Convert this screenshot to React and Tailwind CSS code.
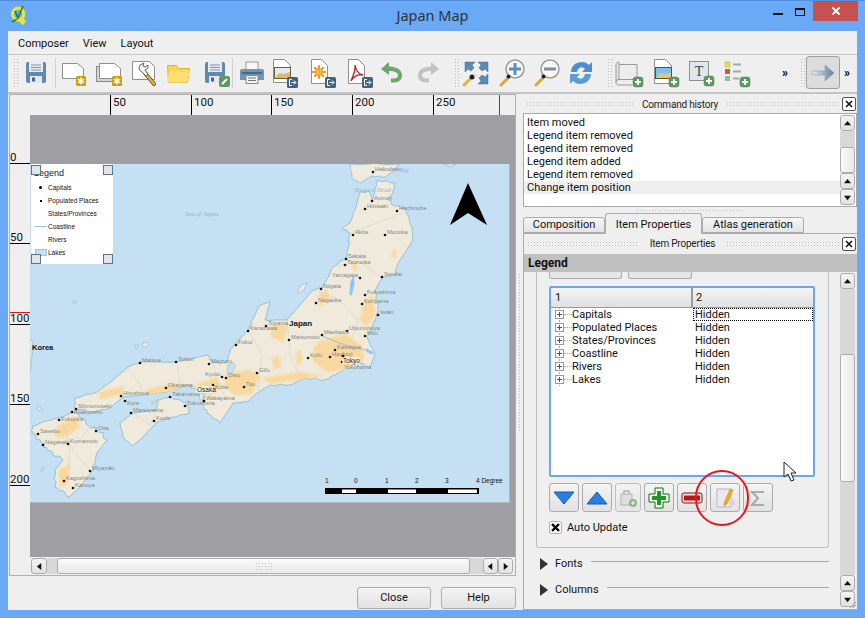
import React from "react";

const grip = "bg-[radial-gradient(#bdbdbd_1px,transparent_1px)] bg-[length:3px_3px]";
const checker = "bg-[radial-gradient(#d8d8d8_1px,#ffffff_1px)] bg-[length:2px_2px]";
const btnFace = "border border-[#acacac] rounded-[3px] bg-gradient-to-b from-[#f4f4f4] to-[#e2e2e2]";

// --- toolbar icons, all on a 30x30 box ---
const Svg = ({ children }) => (
  <svg width="30" height="30" viewBox="0 0 30 30" className="shrink-0">{children}</svg>
);

const PlusBadge = ({ x = 20, y = 20 }) => (
  <g>
    <rect x={x} y={y} width="10" height="10" rx="2.5" fill="#5d9a5f" stroke="#47804a" strokeWidth="0.5" />
    <path d={`M${x + 5} ${y + 2}v6M${x + 2} ${y + 5}h6`} stroke="#fff" strokeWidth="2" />
  </g>
);
const ExportBadge = ({ x = 19, y = 19 }) => (
  <g>
    <rect x={x} y={y} width="11" height="11" rx="1.5" fill="#45637f" />
    <path d={`M${x + 5} ${y + 2.5}h-2.5v6h2.5M${x + 4.5} ${y + 5.5}h4M${x + 7} ${y + 3.5}l2 2-2 2`} stroke="#fff" strokeWidth="1" fill="none" />
  </g>
);
const GoldBadge = ({ x = 19, y = 18 }) => (
  <g>
    <rect x={x} y={y} width="10" height="10" rx="1.5" fill="#c9a106" />
    <path d={`M${x + 5} ${y + 1.5}v7M${x + 1.8} ${y + 3.2}l6.4 3.6M${x + 8.2} ${y + 3.2}l-6.4 3.6`} stroke="#fff" strokeWidth="1.5" />
  </g>
);
const Page = ({ x = 7, y = 3, w = 16, h = 22 }) => (
  <path d={`M${x + 0.5} ${y + 0.5}h${w - 6}l6 6v${h - 6}h-${w}z`} fill="#fff" stroke="#8f8f8f" />
);
const Floppy = () => (
  <g>
    <rect x="5" y="4" width="20" height="21" rx="2" fill="#6288ae" />
    <rect x="8" y="4" width="14" height="10" fill="#e6ecf2" />
    <path d="M10 7h10M10 9.5h10M10 12h10" stroke="#7c96b0" />
    <rect x="9" y="18" width="12" height="7" fill="#e3e9ef" />
    <rect x="11" y="19.5" width="3" height="4" fill="#49688a" />
  </g>
);
const Handle = () => <path d="M11 20L4 27" stroke="#d9a93a" strokeWidth="3" strokeLinecap="round" />;

const SaveIcon = () => <Svg><Floppy /></Svg>;
const NewIcon = () => (
  <Svg>
    <path d="M5.5 5.5h15l6 5v10h-21z" fill="#fff" stroke="#8f8f8f" />
    <GoldBadge x={19} y={18} />
  </Svg>
);
const DupIcon = () => (
  <Svg>
    <rect x="2.5" y="8.5" width="20" height="15" fill="#d4d4d4" stroke="#8a8a8a" />
    <path d="M5.5 5.5h15l6 5v10h-21z" fill="#fff" stroke="#8f8f8f" />
    <GoldBadge x={18} y={18} />
  </Svg>
);
const ManagerIcon = () => (
  <Svg>
    <path d="M3.500 3.500h17l5 5v13h-22z" fill="#fff" stroke="#8f8f8f" />
    <path d="M16 15l9 11" stroke="#5a4a20" strokeWidth="4" strokeLinecap="round" />
    <path d="M16 15l9 11" stroke="#e0b545" strokeWidth="2.500" strokeLinecap="round" />
    <path d="M11 7a4.500 4.500 0 0 0 2 7l4 4 2-2-3-4a4.500 4.500 0 0 0 3-5l-3 2-2-1 1-3z" fill="#f2f2f2" stroke="#555" strokeWidth="0.9" />
  </Svg>
);
const OpenIcon = () => (
  <Svg>
    <path d="M3.5 7.5h9l2 3h11l-2 14h-19z" fill="#fbd653" stroke="#d8b446" />
    <path d="M5 13h21l-3 11.5H3.5z" fill="#fde071" />
  </Svg>
);
const SaveAsIcon = () => (
  <Svg>
    <Floppy />
    <rect x="19" y="18" width="11" height="11" rx="2" fill="#5d9a5f" />
    <path d="M22 26l5-5" stroke="#fff" strokeWidth="2" />
  </Svg>
);
const PrintIcon = () => (
  <Svg>
    <rect x="9" y="4" width="12" height="9" fill="#f8f8f8" stroke="#9a9a9a" />
    <path d="M5 11h20a2 2 0 0 1 2 2v9h-24v-9a2 2 0 0 1 2-2z" fill="#6e94b6" />
    <rect x="5" y="14" width="20" height="2" fill="#46678a" />
    <rect x="9" y="17.5" width="12" height="8" fill="#f4f4f4" stroke="#888" />
    <path d="M11 20h8M11 22.5h8" stroke="#777" />
  </Svg>
);
const ImageIcon = () => (
  <Svg>
    <Page x={4} y={1} w={17} h={23} />
    <rect x="5" y="9" width="17" height="12" fill="#6f5d2c" />
    <rect x="6" y="10" width="15" height="10" fill="#e2eaef" />
    <path d="M6 20l4-5 5 1 6-2v6z" fill="#d9bc6a" />
    <ExportBadge x={18} y={19} />
  </Svg>
);
const SvgFileIcon = () => (
  <Svg>
    <Page x={5} y={1} w={16} h={24} />
    <g stroke="#ee9420" strokeWidth="2.2" strokeLinecap="round">
      <path d="M13 8v12M7 14h12M9 10l8 8M17 10l-8 8" />
    </g>
    <circle cx="13" cy="14" r="3" fill="#f7b13c" />
    <ExportBadge x={19} y={19} />
  </Svg>
);
const PdfIcon = () => (
  <Svg>
    <Page x={5} y={1} w={16} h={24} />
    <path d="M12 7c1 6 3 9 8 10-5-1-9 1-12 6 2-6 5-10 4-16z" fill="none" stroke="#b5262b" strokeWidth="1.4" />
    <ExportBadge x={19} y={19} />
  </Svg>
);
const UndoIcon = ({ color = "#6ea66f" }) => (
  <Svg>
    <path d="M4 11l8-7v4.5c8 0 13 3.5 13 9 0 4-3 7-8 7h-3v-4h3c2 0 4-1 4-3 0-3-3-4.500-9-4.500V17z" fill={color} />
  </Svg>
);
const RedoIcon = () => (
  <Svg>
    <path d="M26 11l-8-7v4.500c-8 0-13 3.500-13 9 0 4 3 7 8 7h3v-4h-3c-2 0-4-1-4-3 0-3 3-4.500 9-4.500V17z" fill="#c2c2c2" />
  </Svg>
);
const ZoomFullIcon = () => (
  <Svg>
    <path d="M4 4h10l-3 3 2 3-3 3-3-2-3 3zM27 4v10l-3-3-3 2-3-3 2-3-3-3zM27 26h-10l3-3-2-3 3-3 3 2 3-3z" fill="#5b8ab5" stroke="#3d6d97" strokeWidth="0.5" />
    <path d="M12 14l6 6" stroke="#cfd8df" strokeWidth="1" />
    <path d="M10 20L3 27" stroke="#e2b43a" strokeWidth="3" strokeLinecap="round" />
    <circle cx="11" cy="19" r="2.500" fill="#222" />
  </Svg>
);
const ZoomInIcon = () => (
  <Svg>
    <circle cx="18" cy="11" r="9" fill="#f7f7f7" stroke="#9c9c9c" strokeWidth="1.5" />
    <path d="M18 5v12M12 11h12" stroke="#5d8fbe" strokeWidth="3" />
    <Handle />
    <circle cx="11.500" cy="18.500" r="2" fill="#222" />
  </Svg>
);
const ZoomOutIcon = () => (
  <Svg>
    <circle cx="18" cy="11" r="9" fill="#f7f7f7" stroke="#9c9c9c" strokeWidth="1.5" />
    <path d="M12 11h12" stroke="#7b8d9e" strokeWidth="3" />
    <Handle />
    <circle cx="11.500" cy="18.500" r="2" fill="#222" />
  </Svg>
);
const RefreshIcon = () => (
  <Svg>
    <path d="M5 14c0-6 5-10 11-10 3 0 5 1 7 3l3-3v10H16l3-3c-3-3-7-2-8 3z" fill="#4d8fcb" />
    <path d="M25 16c0 6-5 10-11 10-3 0-5-1-7-3l-3 3V16h10l-3 3c3 3 7 2 8-3z" fill="#5c9dd6" />
  </Svg>
);
const AddMapIcon = () => (
  <Svg>
    <path d="M5 4c-2 0-3 1-3 3v17c0-2 2-3 3-3z" fill="#e6e6e6" stroke="#9a9a9a" />
    <path d="M5 6.500h18v15H5c-1 0-3 1-3 3 0 1.500 1 2.500 3 2.500h13" fill="#ececec" stroke="#9a9a9a" />
    <PlusBadge x={19} y={19} />
  </Svg>
);
const AddImageIcon = () => (
  <Svg>
    <Page x={4} y={1} w={17} h={24} />
    <rect x="5" y="9" width="17" height="12" fill="#5d5428" />
    <rect x="6" y="10" width="15" height="10" fill="#7dc3ec" />
    <path d="M6 20l4-5 5 1 6-1v5z" fill="#e2c77a" />
    <PlusBadge x={19} y={19} />
  </Svg>
);
const AddLabelIcon = () => (
  <Svg>
    <rect x="3.500" y="3.500" width="19" height="19" fill="#dfe7ee" stroke="#8f8f8f" />
    <text x="13" y="18" textAnchor="middle" fontSize="14" fontFamily="Liberation Serif, serif" fill="#444">T</text>
    <PlusBadge x={18} y={18} />
  </Svg>
);
const AddLegendIcon = () => (
  <Svg>
    <rect x="4" y="4" width="5" height="5" fill="#eadf4f" stroke="#b8b040" strokeWidth="0.5" />
    <rect x="4" y="11" width="5" height="5" fill="#c05a5a" />
    <rect x="4" y="18" width="5" height="5" fill="#8fbf8a" />
    <path d="M12 6.500h8M12 13.500h8M12 20.500h6" stroke="#a8a8a8" strokeWidth="2" />
    <PlusBadge x={19} y={19} />
  </Svg>
);
const MoveIcon = () => (
  <svg width="24" height="18" viewBox="0 0 24 18">
    <defs>
      <linearGradient id="mv" x1="0" x2="1">
        <stop offset="0" stopColor="#e6ebf0" />
        <stop offset="1" stopColor="#5d7f9e" />
      </linearGradient>
    </defs>
    <path d="M1 7h13V1l9 8-9 8v-6H1z" fill="url(#mv)" stroke="#7b96ae" strokeWidth="0.5" />
  </svg>
);

const Grip = ({ className }) => <div className={`${grip} ${className}`} />;
const Sep = ({ className }) => <div className={`w-[1px] h-[30px] bg-[#cfcfcf] ${className}`} />;
const Chevrons = ({ className }) => (
  <span className={`w-[10px] text-[12px] font-bold leading-none text-black ${className}`}>»</span>
);

const Triangle = ({ dir, size = 7 }) => {
  const pts = {
    up: "0,6 8,6 4,1",
    down: "0,2 8,2 4,7",
    left: "6,0 6,8 1,4",
    right: "2,0 2,8 7,4",
  };
  return (
    <svg width={size} height={size} viewBox="0 0 8 8">
      <polygon points={pts[dir]} fill="#111" />
    </svg>
  );
};

const ScrollBtn = ({ dir, className = "" }) => (
  <div className={`${btnFace} flex items-center justify-center shrink-0 ${className}`}>
    <Triangle dir={dir} />
  </div>
);

const CloseBox = () => (
  <div className="w-[14px] h-[14px] border border-[#555] rounded-[2px] bg-white flex items-center justify-center shrink-0">
    <svg width="8" height="8" viewBox="0 0 8 8"><path d="M1 1l6 6M7 1L1 7" stroke="#111" strokeWidth="1.6" /></svg>
  </div>
);

const DockTitle = ({ title, leftW, rightW, height = "h-[18px]" }) => (
  <div className={`${height} flex items-center shrink-0 text-[10px] tracking-[-0.2px] text-[#222]`}>
    <Grip className={`h-[6px] ml-[3px] ${leftW}`} />
    <span className="flex-1 text-center whitespace-nowrap">{title}</span>
    <Grip className={`h-[6px] ${rightW} mr-[1px]`} />
    <CloseBox />
    <div className="w-[1px]" />
  </div>
);

// --- map data, in page pixels (viewBox matches the map's place on the page) ---
// [name, x, y, label dy, label anchor]
const CITIES = [
  ["Hakodate", 373, 172], ["Aomori", 372, 201], ["Hirosaki", 365, 209], ["Hachinohe", 397, 211],
  ["Akita", 353, 235], ["Morioka", 385, 235], ["Sakata", 346, 259], ["Tsuruoka", 345, 265],
  ["Yamagata", 360, 278, 0, "end"], ["Sendai", 382, 277], ["Niigata", 321, 289], ["Fukushima", 365, 295],
  ["Koriyama", 362, 304], ["Nagaoka", 316, 303], ["Iwaki", 378, 315], ["Utsunomiya", 347, 331],
  ["Mito", 365, 336], ["Maebashi", 322, 335], ["Matsumoto", 289, 340], ["Toyama", 266, 326],
  ["Kofu", 308, 358], ["Kawagoe", 335, 350], ["Hachioji", 330, 357], ["Yokohama", 342, 362, 8],
  ["Kanazawa", 248, 331], ["Fukui", 236, 345], ["Gifu", 257, 373], ["Tsu", 244, 387],
  ["Matsue", 140, 363], ["Tottori", 176, 362], ["Maizuru", 209, 364], ["Kyoto", 222, 377, 0, "end"],
  ["Otsu", 226, 378], ["Kobe", 213, 385, 5], ["Okayama", 166, 388], ["Takamatsu", 170, 397],
  ["Tokushima", 185, 406], ["Wakayama", 204, 401], ["Hiroshima", 121, 396], ["Kure", 125, 401, 5],
  ["Matsuyama", 131, 413], ["Kochi", 154, 421], ["Shimonoseki", 76, 409], ["Kitakyushu", 72, 412, 3],
  ["Fukuoka", 59, 420, 2], ["Sasebo", 38, 434], ["Nagasaki", 43, 445], ["Kumamoto", 68, 444],
  ["Oita", 96, 431], ["Miyazaki", 90, 471], ["Kagoshima", 64, 481], ["Kanoya", 73, 488],
];

const HONSHU =
  "360,192 370,192 372,200 375,192 377,180 395,183 393,193 388,198 393,205 405,208 412,227 413,240 402,257 397,265 395,275 382,278 375,290 378,310 375,320 367,337 375,355 370,367 358,362 350,366 340,372 325,380 305,378 290,385 270,385 257,393 247,402 233,403 220,423 207,413 202,403 208,387 197,390 187,385 167,392 143,395 123,397 110,408 93,412 75,408 75,398 97,392 113,380 128,367 140,362 177,362 207,355 213,363 227,363 230,350 248,330 257,310 260,305 270,302 265,320 287,320 313,290 323,287 333,267 347,257 350,233 342,228 350,223 355,210";
const SHIKOKU = "120,423 133,413 157,410 157,400 170,397 187,403 190,413 173,417 157,422 140,440 132,446 123,437";
const KYUSHU =
  "32,427 43,422 62,417 73,412 78,413 90,427 97,428 107,440 97,453 93,470 80,487 68,498 65,493 55,487 55,470 63,460 47,450 42,443 32,433";
const HOKKAIDO = "350,164 352,178 360,183 372,176 385,177 395,170 399,164";

// adds small fixed wiggles between the traced points so a coast doesn't look like a polygon
const rough = (pts, amp = 1) => {
  const list = pts.split(" ").map((p) => p.split(",").map(Number));
  let d = "";
  list.forEach(([x, y], i) => {
    const [nx, ny] = list[(i + 1) % list.length];
    d += `${i ? "L" : "M"}${x} ${y}`;
    for (let k = 1; k < 4; k++) {
      const off = Math.sin((i + 1) * 12.9 + k * 78.2) * amp;
      d += `L${(x + ((nx - x) * k) / 4 + off).toFixed(1)} ${(y + ((ny - y) * k) / 4 - off).toFixed(1)}`;
    }
  });
  return d + "z";
};

const URBAN = [
  "M322 340L345 334L362 345L364 360L345 370L326 372L312 360L314 347z",
  "M226 374L250 370L260 376L252 394L236 396L224 386z",
  "M192 386L215 377L222 385L210 396L198 390z",
  "M145 390L170 384L186 386L170 392L148 395z",
  "M98 392L125 386L122 394L100 400z",
  "M58 426L75 416L80 428L62 438L54 436z",
  "M58 470L70 464L68 484L60 488z",
  "M270 325L288 324L284 342L272 338z",
  "M363 302L373 294L375 316L366 328L360 320z",
  "M318 296L327 288L330 298L320 308z",
  "M262 378L300 372L325 376L300 380L270 384z",
  "M352 345l4-3 2 4-3 3z M352 262l5-2 0 10-4 2z M392 250l5 0-1 8-4 0z M296 352l5-2 1 12-5 4z M272 358l7-3 2 12-7 3z",
];
const BORDERS = [
  "M333 267L360 262L382 278", "M350 233L372 225L404 212", "M313 290L340 300L358 320L350 345",
  "M287 320L290 355L300 378", "M248 330L262 355L258 390", "M128 367L140 385L143 395",
  "M177 362L180 385", "M213 363L218 385L228 400", "M62 417L70 445L68 470", "M90 427L72 450L90 470",
  "M133 413L150 425L157 410",
];
const LAND = { fill: "#efeadb", stroke: "#84b8d2", strokeLinejoin: "round" };

const MapSvg = () => (
  <svg width="479" height="338" viewBox="30 164 479 338" className="block shrink-0">
    <defs>
      <filter id="soft" x="-20%" y="-20%" width="140%" height="140%">
        <feGaussianBlur stdDeviation="1.200" />
      </filter>
    </defs>
    <rect x="30" y="164" width="479" height="338" fill="#c5e0f3" />
    <path d="M30 340L33 341L32 356L30 372z" {...LAND} strokeWidth="0.6" />
    <path d="M444 164L456 164L450 167z" {...LAND} strokeWidth="0.6" />
    <path d={rough(HOKKAIDO, 0.7)} {...LAND} strokeWidth="0.7" />
    <path d={rough(HONSHU, 0.8)} {...LAND} strokeWidth="0.8" />
    <path d={rough(SHIKOKU, 0.7)} {...LAND} strokeWidth="0.8" />
    <path d={rough(KYUSHU, 1.1)} {...LAND} strokeWidth="0.8" />
    <path d="M297 293L301 285L307 283L304 290L300 292z" {...LAND} strokeWidth="0.6" />
    <path d="M142 344l4-2 3 2-2 3-4 0z M135 345l3 0 0 3-3 0z M73 301l3 0 0 2-3 0z" {...LAND} strokeWidth="0.6" />
    <path d="M198 392l5 2 0 6-3 0z M152 402l6-1 0 2-6 1z M37 408l3-2 2 3-3 2z M40 470l4-3 -2 5z" {...LAND} strokeWidth="0.6" />
    <g filter="url(#soft)" fill="#fbd79a" opacity="0.9">
      {URBAN.map((d, i) => (
        <path key={i} d={d} />
      ))}
    </g>
    {BORDERS.map((d, i) => (
      <path key={i} d={d} fill="none" stroke="#d6d2c2" strokeWidth="0.6" />
    ))}
    <path d="M350 282l4-8 1 10-3 12-3-1z" fill="#8fc6ee" stroke="#e8f3fb" strokeWidth="0.6" />
    <path d="M228 365l5-3 3 4-5 8-4-1z" fill="#c5e0f3" stroke="#84b8d2" strokeWidth="0.5" />
    <path d="M322 336L345 345L365 350" fill="none" stroke="#84b8d2" strokeWidth="0.8" />
    <path d="M366 348l8 4-2 3-7-4z" fill="#8fc6ee" stroke="#e8f3fb" strokeWidth="0.5" />
    <g fontFamily="Liberation Serif, serif" fontStyle="italic" fill="#8ab6d2">
      <text x="185" y="216" fontSize="6.500">Sea of Japan</text>
      <text x="354" y="192" fontSize="6.500">Tsugaru Strait</text>
      <text x="399" y="172" fontSize="6.500">Bay</text>
    </g>
    {CITIES.map(([name, x, y, dy = 0, anchor]) => (
      <g key={name}>
        <circle cx={x} cy={y} r="1.300" fill="#111" />
        <text
          x={anchor ? x - 2 : x + 2}
          y={y - 1 + dy}
          textAnchor={anchor || "start"}
          fontSize="5.800"
          fill="#85857f"
          fontFamily="Liberation Sans, sans-serif"
        >
          {name}
        </text>
      </g>
    ))}
    <circle cx="343" cy="356" r="1.500" fill="#111" />
    <rect x="342" y="357" width="18" height="7" fill="#fff" opacity="0.6" />
    <text x="343" y="363" fontSize="6.500" fill="#222" fontFamily="Liberation Sans, sans-serif">Tokyo</text>
    <rect x="196" y="386" width="17" height="7" fill="#fff" opacity="0.6" />
    <text x="197" y="392" fontSize="6.500" fill="#222" fontFamily="Liberation Sans, sans-serif">Osaka</text>
    <text x="289" y="326" fontSize="8" fontWeight="700" fill="#111" fontFamily="Liberation Sans, sans-serif">Japan</text>
    <text x="32" y="350" fontSize="7.500" fontWeight="700" fill="#111" fontFamily="Liberation Sans, sans-serif">Korea</text>
    <polygon points="468,183 487,225 468,213 450,225" fill="#000" />
    <rect x="325" y="488" width="154" height="6" fill="#000" />
    <rect x="342" y="489.500" width="14" height="3.500" fill="#fff" />
    <rect x="388" y="489.500" width="28" height="3.500" fill="#fff" />
    <rect x="448" y="489.500" width="29" height="3.500" fill="#fff" />
    <g fontSize="6.500" fill="#111" fontFamily="Liberation Sans, sans-serif">
      <text x="325" y="483">1</text>
      <text x="354" y="483">0</text>
      <text x="385" y="483">1</text>
      <text x="415" y="483">2</text>
      <text x="445" y="483">3</text>
      <text x="476" y="483">4 Degree</text>
    </g>
  </svg>
);

const LEGEND_ITEMS = [
  ["Capitals", "dotBig"], ["Populated Places", "dot"], ["States/Provinces", ""],
  ["Coastline", "line"], ["Rivers", ""], ["Lakes", "lake"],
];

const Handle8 = ({ className }) => (
  <div className={`absolute w-[10px] h-[10px] bg-[#e4e4e8] border border-[#54788f] ${className}`} />
);

const LegendItem = () => (
  <div className="absolute left-[1px] top-0 w-[82px] h-[100px] bg-white pl-[3px] pt-[3px] font-['Liberation_Sans',sans-serif]">
    <div className="text-[9px] leading-[12px] text-[#222] h-[14px]">Legend</div>
    {LEGEND_ITEMS.map(([name, kind]) => (
      <div key={name} className="flex items-center h-[13px] text-[6.500px] text-[#111] whitespace-nowrap">
        <div className="w-[13px] flex justify-center items-center mr-[1px]">
          {kind === "dotBig" && <div className="w-[3px] h-[3px] rounded-full bg-black" />}
          {kind === "dot" && <div className="w-[2px] h-[2px] bg-black" />}
          {kind === "line" && <div className="w-[12px] h-[1px] bg-[#9cc4dc]" />}
          {kind === "lake" && <div className="w-[12px] h-[7px] bg-[#c5e0f3] border border-[#9cc4dc]" />}
        </div>
        {name}
      </div>
    ))}
    <Handle8 className="left-[0px] top-[1px]" />
    <Handle8 className="left-[72px] top-[1px]" />
    <Handle8 className="left-[0px] top-[90px]" />
    <Handle8 className="left-[72px] top-[90px]" />
  </div>
);

const TOP_TICKS = [["50", 100], ["100", 181], ["150", 261], ["200", 342], ["250", 423]];
const LEFT_TICKS = [["0", 49], ["50", 129], ["100", 210], ["150", 290], ["200", 371]];

const TopRuler = () => (
  <div className="h-[20px] bg-[#efefef] relative shrink-0 text-[11.500px] leading-[14px]">
    {TOP_TICKS.map(([label, x]) => (
      <div key={label} className="absolute top-0 h-[20px] border-l border-black pl-[2px] text-[#111]" style={{ left: x }}>{label}</div>
    ))}
    <div className="absolute top-0 h-[20px] w-[1px] bg-[#d01818] left-[489px]" />
  </div>
);

const LeftRuler = () => (
  <div className="w-[20px] bg-[#efefef] relative shrink-0 text-[11.500px] leading-[17px]">
    {LEFT_TICKS.map(([label, y]) => (
      <div key={label} className="absolute left-0 w-[20px] h-[15px] border-b border-black text-[#111]" style={{ top: y - 15 }}>{label}</div>
    ))}
    <div className="absolute left-0 w-[20px] h-[1px] bg-[#d01818] top-[197px]" />
  </div>
);

const TreeRow = ({ name, focus }) => (
  <div className="flex h-[13px] leading-[14px] text-[11px] text-[#111]">
    <div className="w-[142px] flex items-center pl-[4px] shrink-0 relative">
      <div className="absolute left-[8px] top-0 bottom-0 border-l border-dotted border-[#aaa]" />
      <div className="w-[9px] h-[9px] border border-[#999] bg-white relative flex items-center justify-center shrink-0">
        <svg width="7" height="7" viewBox="0 0 7 7"><path d="M3.500 1v5M1 3.500h5" stroke="#555" /></svg>
      </div>
      <div className="w-[8px] border-t border-dotted border-[#aaa] shrink-0" />
      <span className="whitespace-nowrap">{name}</span>
    </div>
    <div className={`flex-1 pl-[2px] ${focus ? "outline outline-1 -outline-offset-1 outline-dotted outline-black" : ""}`}>Hidden</div>
  </div>
);

const IconBtn = ({ children, className = "w-[30px]" }) => (
  <div className={`${btnFace} h-[29px] flex items-center justify-center shrink-0 ${className}`}>{children}</div>
);

const Collapsed = ({ label, className }) => (
  <div className={`flex items-center h-[16px] text-[11px] text-[#111] shrink-0 ${className}`}>
    <svg width="8" height="12" viewBox="0 0 8 12" className="ml-[4px] mr-[7px] shrink-0"><polygon points="0,0 8,6 0,12" fill="#333" /></svg>
    <span className="whitespace-nowrap mr-[8px]">{label}</span>
    <div className="flex-1 h-[1px] bg-[#a8a8a8] mb-[6px]" />
  </div>
);

const Tab = ({ label, active, className }) => (
  <div
    className={`border border-[#acacac] rounded-t-[3px] flex items-center justify-center text-[11px] text-[#111] ${
      active ? "h-[21px] pt-[2px] bg-[#efefef] border-b-0 z-10 -mb-[1px]" : "h-[16px] bg-gradient-to-b from-[#f6f6f6] to-[#e4e4e4]"
    } ${className}`}
  >
    {label}
  </div>
);

const HISTORY = [
  "Item moved", "Legend item removed", "Legend item removed",
  "Legend item added", "Legend item removed", "Change item position",
];
const LAYERS = ["Capitals", "Populated Places", "States/Provinces", "Coastline", "Rivers", "Lakes"];

const App = () => (
  <div className="w-[865px] h-[618px] bg-[#69a9f5] flex flex-col relative overflow-hidden font-['Roboto',sans-serif]">
    {/* Title bar */}
    <div className="h-[31px] relative flex items-center justify-center shrink-0 border-t border-[#4f8fdc]">
      <svg width="22" height="22" viewBox="0 0 22 22" className="absolute left-[7px] top-[3px]">
        <path d="M11 4a6 6 0 1 0 1 12l4 3 1-2-3-2a6 6 0 0 0-3-11z" fill="none" stroke="#e9e92e" strokeWidth="3" />
        <path d="M8 7l3 7 5-12" fill="none" stroke="#2d7f2d" strokeWidth="1.600" />
        <path d="M5 18l5-3" stroke="#1e5f1e" strokeWidth="1.200" />
      </svg>
      <span className="text-[14.500px] text-[#2f3338] font-['Noto_Sans',sans-serif]">Japan Map</span>
      <div className="absolute left-[773px] top-[12px] w-[10px] h-[2px] bg-[#111]" />
      <div className="absolute left-[795px] top-[7px] w-[10px] h-[8px] border border-[#111] border-t-2" />
      <div className="absolute left-[813px] top-0 w-[45px] h-[20px] bg-[#c75050] flex items-center justify-center">
        <svg width="10" height="10" viewBox="0 0 10 10"><path d="M1.500 1.500l7 7M8.500 1.500l-7 7" stroke="#fff" strokeWidth="1.800" /></svg>
      </div>
    </div>

    <div className="flex-1 mx-[8px] mb-[8px] bg-[#efefef] flex flex-col min-h-0">
      {/* Menu */}
      <div className="h-[24px] flex items-center pt-[3px] pl-[10px] gap-[14px] text-[11px] text-[#111] border-b border-[#c8c8c8] shrink-0">
        <span>Composer</span>
        <span>View</span>
        <span>Layout</span>
      </div>

      {/* Toolbar */}
      <div className="h-[37px] pb-[2px] flex items-center shrink-0">
        <Grip className="ml-[5px] w-[6px] h-[30px]" />
        <div className="ml-[2px]"><SaveIcon /></div>
        <Sep className="ml-[4px]" />
        <div className="ml-[1px]"><NewIcon /></div>
        <div className="ml-[7px]"><DupIcon /></div>
        <div className="ml-[5px]"><ManagerIcon /></div>
        <div className="ml-[5px]"><OpenIcon /></div>
        <div className="ml-[6px]"><SaveAsIcon /></div>
        <Sep className="ml-[2px]" />
        <div className="ml-[4px]"><PrintIcon /></div>
        <div className="ml-[2px]"><ImageIcon /></div>
        <div className="ml-[7px]"><SvgFileIcon /></div>
        <div className="ml-[7px]"><PdfIcon /></div>
        <div className="ml-[4px]"><UndoIcon /></div>
        <div className="ml-[6px]"><RedoIcon /></div>
        <Grip className="ml-[11px] w-[6px] h-[30px]" />
        <div className="ml-[1px]"><ZoomFullIcon /></div>
        <div className="ml-[6px]"><ZoomInIcon /></div>
        <div className="ml-[5px]"><ZoomOutIcon /></div>
        <div className="ml-[4px]"><RefreshIcon /></div>
        <Grip className="ml-[11px] w-[6px] h-[30px]" />
        <div className="ml-[1px]"><AddMapIcon /></div>
        <div className="ml-[6px]"><AddImageIcon /></div>
        <div className="ml-[6px]"><AddLabelIcon /></div>
        <div className="ml-[5px]"><AddLegendIcon /></div>
        <Chevrons className="ml-[31px]" />
        <Grip className="ml-[8px] w-[6px] h-[30px]" />
        <div className="ml-[0px] w-[34px] h-[33px] border border-[#a0a0a0] rounded-[3px] bg-[#dcdcdc] flex items-center justify-center shrink-0">
          <MoveIcon />
        </div>
        <Chevrons className="ml-[4px]" />
      </div>
      <div className="h-[2px] bg-[#c4c4c4] shrink-0" />

      {/* Main */}
      <div className="flex-1 flex min-h-0">
        {/* Left: composer canvas */}
        <div className="w-[507px] ml-[1px] flex flex-col shrink-0">
          <div className="h-[482px] border border-[#b0b0b0] flex flex-col shrink-0">
            <TopRuler />
            <div className="flex-1 flex min-h-0">
              <LeftRuler />
              <div className="flex-1 flex flex-col min-w-0">
                <div className="h-[442px] bg-[#9f9ea2] pt-[49px] shrink-0 relative">
                  <div className="relative w-[479px] border-b border-r border-[#b5b5b8] box-content">
                    <MapSvg />
                    <LegendItem />
                  </div>
                </div>
                <div className="h-[18px] flex items-center bg-[#efefef] shrink-0 pl-[1px]">
                  <ScrollBtn dir="left" className="w-[16px] h-[16px]" />
                  <div className={`w-[10px] h-[16px] ${checker}`} />
                  <div className="w-[413px] h-[16px] border border-[#acacac] rounded-[2px] bg-gradient-to-b from-[#fbfbfb] to-[#e8e8e8] flex items-center justify-center">
                    <Grip className="w-[18px] h-[9px]" />
                  </div>
                  <div className={`w-[13px] h-[16px] ${checker}`} />
                  <ScrollBtn dir="left" className="w-[15px] h-[16px]" />
                  <ScrollBtn dir="right" className="w-[15px] h-[16px]" />
                </div>
              </div>
            </div>
          </div>
          <div className="flex justify-end gap-[10px] mt-[11px]">
            <div className={`${btnFace} w-[74px] h-[22px] flex items-center justify-center text-[11px] text-[#111]`}>Close</div>
            <div className={`${btnFace} w-[75px] h-[22px] flex items-center justify-center text-[11px] text-[#111]`}>Help</div>
          </div>
        </div>

        {/* Splitter */}
        <div className="w-[7px] flex items-center justify-center shrink-0">
          <Grip className="w-[3px] h-[158px]" />
        </div>

        {/* Right: docks */}
        <div className="w-[334px] flex flex-col shrink-0 pt-[1px]">
          <DockTitle title="Command history" leftW="w-[108px]" rightW="w-[115px]" />
          <div className="h-[94px] border border-[#a8a8a8] bg-white flex shrink-0">
            <div className="flex-1 pt-[2px] text-[11px] leading-[13px] text-[#111]">
              {HISTORY.map((h, i) => (
                <div key={i} className={`h-[13px] pl-[3px] whitespace-nowrap ${i === 5 ? "bg-[#efefef]" : ""}`}>{h}</div>
              ))}
            </div>
            <div className="w-[15px] mr-[1px] flex flex-col py-[1px] shrink-0">
              <ScrollBtn dir="up" className="h-[16px]" />
              <div className={`h-[16px] ${checker}`} />
              <div className="h-[26px] border border-[#acacac] rounded-[2px] bg-gradient-to-r from-[#fbfbfb] to-[#e8e8e8]" />
              <ScrollBtn dir="up" className="h-[16px]" />
              <ScrollBtn dir="down" className="h-[16px]" />
            </div>
          </div>
          <div className="h-[6px] flex justify-center items-center shrink-0">
            <Grip className="w-[108px] h-[3px]" />
          </div>

          <div className="flex items-end shrink-0 h-[20px]">
            <Tab label="Composition" className="w-[82px]" />
            <Tab label="Item Properties" active className="w-[97px]" />
            <Tab label="Atlas generation" className="w-[102px]" />
          </div>

          <div className="flex-1 border-t border-l border-[#acacac] flex flex-col min-h-0">
            <DockTitle title="Item Properties" leftW="w-[112px]" rightW="w-[115px]" height="h-[19px]" />
            <div className="h-[18px] mt-[1px] bg-[#c0c0c0] pl-[4px] text-[12px] font-bold leading-[19px] text-[#111] shrink-0">Legend</div>
            <div className="flex-1 flex min-h-0 border-b border-[#acacac] relative">
              <div className="w-[293px] ml-[12px] flex flex-col shrink-0">
                <div className="h-[276px] border-x border-b border-[#c0c0c0] rounded-b-[3px] pl-[12px] flex flex-col shrink-0">
                  <div className="flex h-[7px] shrink-0">
                    <div className="w-[73px] border-x border-b border-[#acacac] rounded-b-[3px] bg-[#e6e6e6]" />
                    <div className="w-[64px] ml-[6px] border-x border-b border-[#acacac] rounded-b-[3px] bg-[#e6e6e6]" />
                  </div>
                  <div className="w-[266px] h-[191px] mt-[7px] border-2 border-[#6aa9ee] rounded-[2px] bg-white shrink-0">
                    <div className="flex h-[20px] text-[11px] text-[#111] leading-[20px] bg-gradient-to-b from-[#f4f4f4] to-[#e0e0e0] border-b border-[#9a9a9a]">
                      <div className="w-[142px] pl-[4px] border-r-2 border-[#9a9a9a] shrink-0">1</div>
                      <div className="flex-1 pl-[3px]">2</div>
                    </div>
                    {LAYERS.map((name, i) => (
                      <TreeRow key={name} name={name} focus={i === 0} />
                    ))}
                  </div>
                  <div className="flex gap-[3px] mt-[6px] shrink-0">
                    <IconBtn>
                      <svg width="22" height="14" viewBox="0 0 22 14"><polygon points="1,1 21,1 11,13" fill="#2b7fe0" stroke="#1a55a8" /></svg>
                    </IconBtn>
                    <IconBtn>
                      <svg width="22" height="14" viewBox="0 0 22 14"><polygon points="1,13 21,13 11,1" fill="#2b7fe0" stroke="#1a55a8" /></svg>
                    </IconBtn>
                    <IconBtn className="w-[26px] opacity-70">
                      <svg width="20" height="20" viewBox="0 0 20 20">
                        <path d="M3 6h11v11H3z" fill="#d8d8d8" stroke="#999" />
                        <path d="M6 6V3h5v3" fill="none" stroke="#999" strokeWidth="1.500" />
                        <circle cx="15" cy="15" r="4" fill="#6b9e6b" />
                        <path d="M15 13v4M13 15h4" stroke="#fff" />
                      </svg>
                    </IconBtn>
                    <IconBtn>
                      <svg width="22" height="22" viewBox="0 0 22 22">
                        <path d="M7 1h8v6h6v8h-6v6H7v-6H1V7h6z" fill="#fff" stroke="#0f6a0f" />
                        <path d="M9 4h4v5h5v4h-5v5H9v-5H4V9h5z" fill="#1e9a1e" />
                      </svg>
                    </IconBtn>
                    <IconBtn>
                      <svg width="22" height="12" viewBox="0 0 22 12">
                        <rect x="1" y="1" width="20" height="10" rx="2" fill="#f4dede" stroke="#8a1010" />
                        <rect x="3" y="3.500" width="16" height="5" fill="#b81616" />
                      </svg>
                    </IconBtn>
                    <IconBtn>
                      <svg width="24" height="24" viewBox="0 0 24 24">
                        <path d="M4 3h14v18H4z" fill="#e8eaf0" stroke="#b5b5c0" />
                        <path d="M11 17L17 3l3 1-6 14-3 2z" fill="#f2a81e" stroke="#d98a10" strokeWidth="0.5" />
                        <circle cx="19" cy="17" r="3" fill="#d8d8d8" />
                      </svg>
                    </IconBtn>
                    <IconBtn>
                      <svg width="20" height="20" viewBox="0 0 20 20">
                        <path d="M16 4H4l6 6-6 7h12" fill="none" stroke="#a8a8a8" strokeWidth="2" />
                      </svg>
                    </IconBtn>
                  </div>
                  <div className="flex items-center mt-[9px] shrink-0">
                    <div className="w-[13px] h-[13px] border border-[#b0b0b0] rounded-[2px] bg-white flex items-center justify-center">
                      <svg width="9" height="9" viewBox="0 0 9 9"><path d="M1 1l7 7M8 1L1 8" stroke="#000" strokeWidth="2.400" /></svg>
                    </div>
                    <span className="ml-[5px] text-[11px] leading-[13px] text-[#111]">Auto Update</span>
                  </div>
                </div>
                <Collapsed label="Fonts" className="mt-[8px]" />
                <Collapsed label="Columns" className="mt-[10px]" />
              </div>
              <div className="w-[15px] ml-[11px] flex flex-col shrink-0 pt-[1px] mb-[2px]">
                <ScrollBtn dir="up" className="h-[16px]" />
                <div className={`h-[65px] ${checker}`} />
                <div className="h-[128px] border border-[#acacac] rounded-[2px] bg-gradient-to-r from-[#fbfbfb] to-[#e8e8e8]" />
                <div className={`flex-1 ${checker}`} />
                <ScrollBtn dir="up" className="h-[16px]" />
                <ScrollBtn dir="down" className="h-[16px]" />
              </div>
              <svg width="9" height="9" viewBox="0 0 9 9" className="absolute right-0 bottom-0">
                <path d="M8 2L2 8M8 5L5 8" stroke="#9a9a9a" />
              </svg>
            </div>
          </div>
        </div>
      </div>
    </div>

    {/* Red annotation circle and mouse pointer, lying over the panel */}
    <div className="absolute left-[695px] top-[470px] w-[54px] h-[56px] rounded-full border-2 border-[#e8161c]" />
    <svg width="14" height="22" viewBox="0 0 14 22" className="absolute left-[783px] top-[461px]">
      <path d="M1 1v15l4-3 3 7 3-1-3-7h5z" fill="#fff" stroke="#222" />
    </svg>
  </div>
);

export default App;
